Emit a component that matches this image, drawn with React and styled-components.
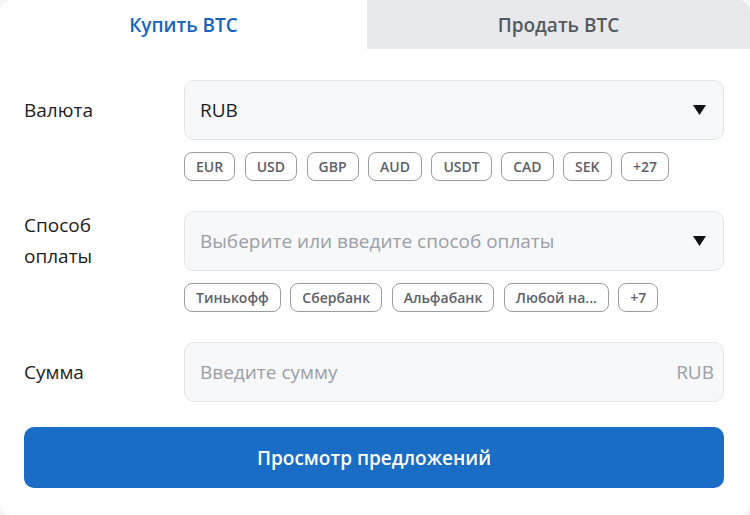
import React from "react";
import styled, { createGlobalStyle } from "styled-components";

const Global = createGlobalStyle`
  html, body { margin: 0; padding: 0; background: #f4f5f6; }
  body { font-family: "Open Sans", "Noto Sans", sans-serif; }
  * { box-sizing: border-box; }
`;

const Card = styled.div`
  width: 750px;
  height: 515px;
  background: #fff;
  border-radius: 12px;
  overflow: hidden;
  display: flex;
  flex-direction: column;
`;

const Tabs = styled.div`
  display: grid;
  grid-template-columns: 367px 1fr;
  height: 49px;
`;

const Tab = styled.div`
  display: flex;
  align-items: center;
  justify-content: center;
  font-size: 19px;
  font-weight: 600;
  color: ${(p) => (p.$active ? "#1565c0" : "#555a60")};
  background: ${(p) => (p.$active ? "#fff" : "#e8e9ec")};
`;

const Form = styled.div`
  padding: 31px 26px 0 24px;
  display: flex;
  flex-direction: column;
`;

const Row = styled.div`
  display: grid;
  grid-template-columns: 160px 1fr;
  margin-bottom: ${(p) => p.$mb || 0}px;
`;

const Label = styled.div`
  font-size: 19px;
  color: #1b1d20;
  line-height: 31px;
  height: 60px;
  display: flex;
  align-items: center;
`;

const Field = styled.div`
  display: flex;
  flex-direction: column;
`;

const Input = styled.div`
  height: 60px;
  background: #f7f8fa;
  border: 1px solid #e2e4e8;
  border-radius: 10px;
  display: flex;
  align-items: center;
  justify-content: space-between;
  padding: 0 15px 0 15px;
  font-size: 19px;
  color: ${(p) => (p.$placeholder ? "#9a9ea5" : "#1b1d20")};
`;

const Suffix = styled.span`
  color: #9a9ea5;
  font-size: 19px;
  margin-right: -6px;
`;

const Caret = styled.svg`
  width: 13px;
  height: 10px;
  margin-right: 2px;
`;

const Chips = styled.div`
  display: flex;
  gap: 9.5px;
  margin-top: 12px;
`;

const Chip = styled.div`
  height: 29px;
  padding: 0 11px;
  border: 1px solid #9a9ca0;
  border-radius: 8px;
  display: flex;
  align-items: center;
  font-size: 14px;
  font-weight: 600;
  color: #5d6167;
  background: #fff;
`;

const Button = styled.button`
  margin-top: 25px;
  height: 61px;
  border: none;
  border-radius: 10px;
  background: #1a6dc4;
  color: #fff;
  font-family: "Open Sans", "Noto Sans", sans-serif;
  font-size: 19px;
  font-weight: 600;
  width: 700px;
`;

const CaretIcon = () => (
  <Caret viewBox="0 0 13 10">
    <path d="M0 0 H13 L6.5 10 Z" fill="#111" />
  </Caret>
);

export default function App() {
  return (
    <>
      <Global />
      <Card>
        <Tabs>
          <Tab $active>Купить BTC</Tab>
          <Tab>Продать BTC</Tab>
        </Tabs>
        <Form>
          <Row $mb={30}>
            <Label>Валюта</Label>
            <Field>
              <Input>
                RUB
                <CaretIcon />
              </Input>
              <Chips>
                {["EUR", "USD", "GBP", "AUD", "USDT", "CAD", "SEK", "+27"].map((c) => (
                  <Chip key={c}>{c}</Chip>
                ))}
              </Chips>
            </Field>
          </Row>
          <Row $mb={30}>
            <Label>
              Способ
              <br />
              оплаты
            </Label>
            <Field>
              <Input $placeholder>
                Выберите или введите способ оплаты
                <CaretIcon />
              </Input>
              <Chips>
                {["Тинькофф", "Сбербанк", "Альфабанк", "Любой на...", "+7"].map((c) => (
                  <Chip key={c}>{c}</Chip>
                ))}
              </Chips>
            </Field>
          </Row>
          <Row>
            <Label>Сумма</Label>
            <Field>
              <Input $placeholder>
                Введите сумму
                <Suffix>RUB</Suffix>
              </Input>
            </Field>
          </Row>
          <Button>Просмотр предложений</Button>
        </Form>
      </Card>
    </>
  );
}
